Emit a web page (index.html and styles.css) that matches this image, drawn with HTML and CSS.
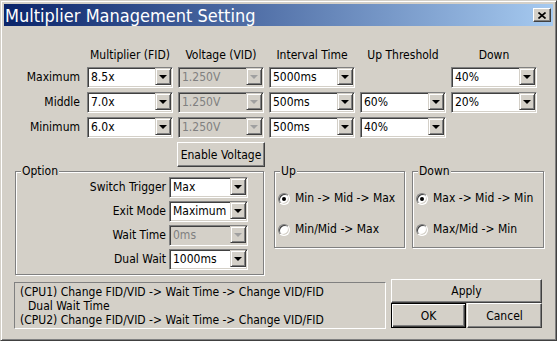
FILE: index.html
```html
<!DOCTYPE html>
<html>
  <head>
    <meta charset="utf-8">
    <title>Multiplier Management Setting</title>
    <link rel="stylesheet" href="styles.css">
  </head>
  <body>

    <div class="window">

      <div class="titlebar">
        <span class="title">Multiplier Management Setting</span>
        <span class="close">
          <svg width="8" height="7" viewBox="0 0 8 7"><path d="M0.5 0.5L7.5 6.5M7.5 0.5L0.5 6.5" stroke="#000" stroke-width="1.6" fill="none"/></svg>
        </span>
      </div>

      <div class="params">
        <span></span>
        <span class="hd">Multiplier (FID)</span>
        <span class="hd">Voltage (VID)</span>
        <span class="hd">Interval Time</span>
        <span class="hd">Up Threshold</span>
        <span class="hd">Down</span>

        <span class="lbl">Maximum</span>
        <div class="combo"><span class="val">8.5x</span><span class="drop"></span></div>
        <div class="combo off"><span class="val">1.250V</span><span class="drop"></span></div>
        <div class="combo"><span class="val">5000ms</span><span class="drop"></span></div>
        <span></span>
        <div class="combo"><span class="val">40%</span><span class="drop"></span></div>

        <span class="lbl">Middle</span>
        <div class="combo"><span class="val">7.0x</span><span class="drop"></span></div>
        <div class="combo off"><span class="val">1.250V</span><span class="drop"></span></div>
        <div class="combo"><span class="val">500ms</span><span class="drop"></span></div>
        <div class="combo"><span class="val">60%</span><span class="drop"></span></div>
        <div class="combo"><span class="val">20%</span><span class="drop"></span></div>

        <span class="lbl">Minimum</span>
        <div class="combo"><span class="val">6.0x</span><span class="drop"></span></div>
        <div class="combo off"><span class="val">1.250V</span><span class="drop"></span></div>
        <div class="combo"><span class="val">500ms</span><span class="drop"></span></div>
        <div class="combo"><span class="val">40%</span><span class="drop"></span></div>
        <span></span>

        <span></span>
        <span></span>
        <button class="btn enable">Enable Voltage</button>
      </div>

      <div class="groups">

        <fieldset class="group option">
          <legend>Option</legend>
          <div class="opts">
            <span class="lbl">Switch Trigger</span>
            <div class="combo"><span class="val">Max</span><span class="drop"></span></div>
            <span class="lbl">Exit Mode</span>
            <div class="combo"><span class="val">Maximum</span><span class="drop"></span></div>
            <span class="lbl">Wait Time</span>
            <div class="combo off"><span class="val">0ms</span><span class="drop"></span></div>
            <span class="lbl">Dual Wait</span>
            <div class="combo"><span class="val">1000ms</span><span class="drop"></span></div>
          </div>
        </fieldset>

        <fieldset class="group up">
          <legend>Up</legend>
          <div class="radios">
            <label class="opt"><span class="radio on"></span>Min -&gt; Mid -&gt; Max</label>
            <label class="opt"><span class="radio"></span>Min/Mid -&gt; Max</label>
          </div>
        </fieldset>

        <fieldset class="group down">
          <legend>Down</legend>
          <div class="radios">
            <label class="opt"><span class="radio on"></span>Max -&gt; Mid -&gt; Min</label>
            <label class="opt"><span class="radio"></span>Max/Mid -&gt; Min</label>
          </div>
        </fieldset>

      </div>

      <div class="footer">
        <div class="info">
          <div>(CPU1) Change FID/VID -&gt; Wait Time -&gt; Change VID/FID</div>
          <div class="indent">Dual Wait Time</div>
          <div>(CPU2) Change FID/VID -&gt; Wait Time -&gt; Change VID/FID</div>
        </div>
        <div class="actions">
          <button class="btn apply">Apply</button>
          <button class="btn ok">OK</button>
          <button class="btn cancel">Cancel</button>
        </div>
      </div>

    </div>

  </body>
</html>
```

FILE: styles.css
```css
body {
  margin: 0;
  font-family: "DejaVu Sans Condensed", "DejaVu Sans", sans-serif;
  font-stretch: condensed;
  font-size: 12px;
  color: #000;
}

.window {
  width: 557px;
  height: 341px;
  box-sizing: border-box;
  background: #D4D0C8;
  border: 1px solid;
  border-color: #D4D0C8 #404040 #404040 #D4D0C8;
  box-shadow: inset 1px 1px #FFF, inset -1px -1px #808080;
  padding: 3px;
}

/* title bar */

.titlebar {
  height: 22px;
  display: flex;
  align-items: center;
  justify-content: space-between;
  background: linear-gradient(to right, #0A246A, #A6CAF0);
  color: #FFF;
}

.title {
  font-size: 18px;
  padding-left: 1px;
}

.close {
  width: 18px;
  height: 14px;
  box-sizing: border-box;
  margin-right: 2px;
  display: flex;
  align-items: center;
  justify-content: center;
  background: #D4D0C8;
  border: 1px solid;
  border-color: #FFF #404040 #404040 #FFF;
  box-shadow: inset -1px -1px #808080;
}

/* combo boxes */

.combo {
  height: 21px;
  box-sizing: border-box;
  display: flex;
  background: #FFF;
  border: 1px solid;
  border-color: #808080 #FFF #FFF #808080;
  box-shadow: inset 1px 1px #404040, inset -1px -1px #D4D0C8;
  padding: 2px;
}

.combo .val {
  flex: 1;
  line-height: 15px;
  padding-left: 1px;
  white-space: nowrap;
}

.combo .drop {
  width: 16px;
  height: 17px;
  margin: -2px -1px -2px 0;
  box-sizing: border-box;
  display: flex;
  align-items: center;
  justify-content: center;
  background: #D4D0C8;
  border: 1px solid;
  border-color: #D4D0C8 #404040 #404040 #D4D0C8;
  box-shadow: inset 1px 1px #FFF, inset -1px -1px #808080;
}

.combo .drop::after {
  content: "";
  border-top: 4px solid #000;
  border-left: 4px solid transparent;
  border-right: 4px solid transparent;
  margin-left: -1px;
}

.combo.off {
  background: #D4D0C8;
}

.combo.off .val {
  color: #808080;
}

.combo.off .drop::after {
  border-top-color: #A0A0A0;
}

/* buttons */

.btn {
  font: inherit;
  color: #000;
  background: #D4D0C8;
  border: 1px solid;
  border-color: #FFF #404040 #404040 #FFF;
  box-shadow: inset -1px -1px #808080;
  padding: 0;
  margin: 0;
  box-sizing: border-box;
}

.btn.ok {
  border-color: #000;
  box-shadow: inset 1px 1px #FFF, inset -1px -1px #404040, inset -2px -2px #808080;
}

/* parameter table */

.params {
  display: grid;
  grid-template-columns: 78px repeat(5, 86px);
  grid-template-rows: 15px repeat(3, 21px) 25px;
  gap: 4px 5px;
  margin-top: 22px;
}

.hd {
  text-align: center;
  line-height: 15px;
  white-space: nowrap;
}

.lbl {
  text-align: right;
  line-height: 21px;
  padding-right: 2px;
  white-space: nowrap;
}

.enable {
  width: 88px;
  margin-left: -1px;
}

/* group boxes */

.groups {
  display: flex;
  align-items: flex-start;
  margin: -1px 0 0 11px;
}

.group {
  margin: 0;
  padding: 0;
  box-sizing: border-box;
  border: 1px solid #808080;
  box-shadow: inset 1px 1px #FFF, 1px 1px #FFF;
}

.group legend {
  line-height: 11px;
  padding: 0 1px;
  margin-left: 5px;
  background: #D4D0C8;
}

.option {
  width: 249px;
  padding: 0 15px 4px 0;
}

.opts {
  display: grid;
  grid-template-columns: 1fr 79px;
  grid-auto-rows: 21px;
  gap: 3px;
}

.opts .lbl {
  padding-right: 0;
}

.up {
  width: 131px;
  margin-left: 10px;
}

.down {
  width: 132px;
  margin-left: 7px;
}

.radios {
  display: flex;
  flex-direction: column;
  gap: 18px;
  padding: 15px 0 11px 3px;
}

.opt {
  display: flex;
  align-items: center;
  gap: 5px;
  line-height: 13px;
  white-space: nowrap;
}

.radio {
  width: 12px;
  height: 12px;
  box-sizing: border-box;
  border-radius: 50%;
  background: #FFF;
  border: 1px solid;
  border-color: #808080 #FFF #FFF #808080;
  box-shadow: inset 1px 1px #404040, inset -1px -1px #D4D0C8;
  display: flex;
  align-items: center;
  justify-content: center;
}

.radio.on::after {
  content: "";
  width: 4px;
  height: 4px;
  border-radius: 50%;
  background: #000;
}

/* footer */

.footer {
  display: flex;
  align-items: flex-start;
  margin: 4px 0 0 10px;
}

.info {
  width: 372px;
  height: 47px;
  box-sizing: border-box;
  margin-top: 3px;
  border: 1px solid;
  border-color: #808080 #FFF #FFF #808080;
  padding: 2px 0 0 5px;
  line-height: 14px;
  white-space: nowrap;
}

.info .indent {
  padding-left: 8px;
}

.actions {
  width: 151px;
  margin-left: 5px;
  display: grid;
  grid-template-columns: 75px 75px;
  grid-template-rows: 24px 25px;
  column-gap: 1px;
}

.apply {
  grid-column: 1 / 3;
}
```
